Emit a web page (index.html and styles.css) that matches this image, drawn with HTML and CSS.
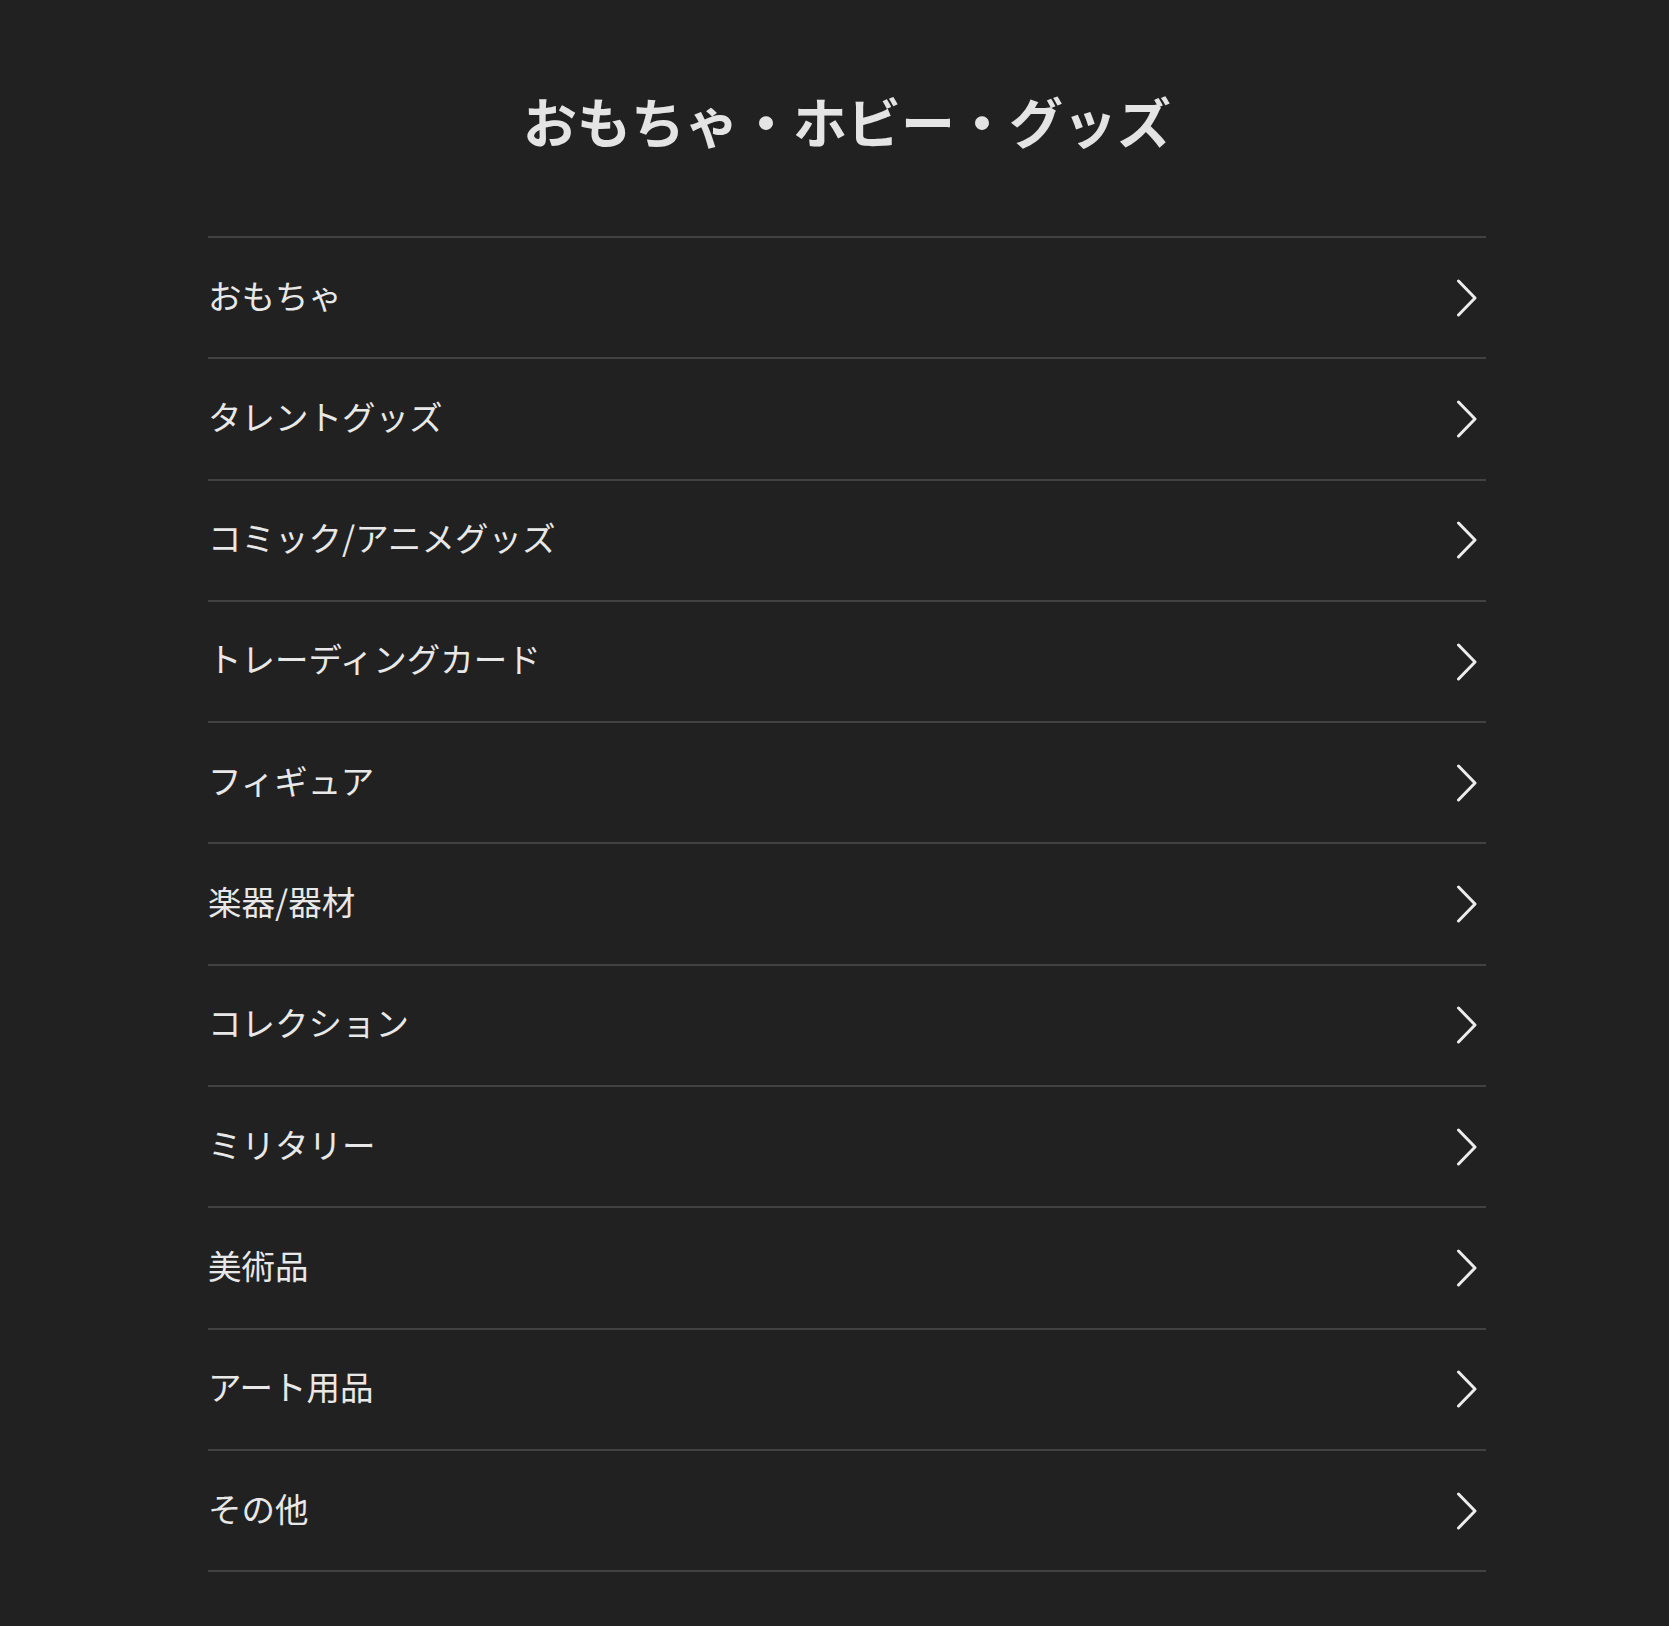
FILE: index.html
```html
<!DOCTYPE html>
<html lang="ja">
<head>
<meta charset="utf-8">
<title>おもちゃ・ホビー・グッズ</title>
<link rel="stylesheet" href="styles.css">
</head>
<body>
<main class="page">
  <h1 class="title">おもちゃ・ホビー・グッズ</h1>
  <ul class="list">
    <li class="item"><span class="label">おもちゃ</span><svg class="chev" viewBox="0 0 22 38" width="22" height="38"><path d="M2.5 2 L19 19 L2.5 36"/></svg></li>
    <li class="item"><span class="label">タレントグッズ</span><svg class="chev" viewBox="0 0 22 38" width="22" height="38"><path d="M2.5 2 L19 19 L2.5 36"/></svg></li>
    <li class="item"><span class="label">コミック/アニメグッズ</span><svg class="chev" viewBox="0 0 22 38" width="22" height="38"><path d="M2.5 2 L19 19 L2.5 36"/></svg></li>
    <li class="item"><span class="label">トレーディングカード</span><svg class="chev" viewBox="0 0 22 38" width="22" height="38"><path d="M2.5 2 L19 19 L2.5 36"/></svg></li>
    <li class="item"><span class="label">フィギュア</span><svg class="chev" viewBox="0 0 22 38" width="22" height="38"><path d="M2.5 2 L19 19 L2.5 36"/></svg></li>
    <li class="item"><span class="label">楽器/器材</span><svg class="chev" viewBox="0 0 22 38" width="22" height="38"><path d="M2.5 2 L19 19 L2.5 36"/></svg></li>
    <li class="item"><span class="label">コレクション</span><svg class="chev" viewBox="0 0 22 38" width="22" height="38"><path d="M2.5 2 L19 19 L2.5 36"/></svg></li>
    <li class="item"><span class="label">ミリタリー</span><svg class="chev" viewBox="0 0 22 38" width="22" height="38"><path d="M2.5 2 L19 19 L2.5 36"/></svg></li>
    <li class="item"><span class="label">美術品</span><svg class="chev" viewBox="0 0 22 38" width="22" height="38"><path d="M2.5 2 L19 19 L2.5 36"/></svg></li>
    <li class="item"><span class="label">アート用品</span><svg class="chev" viewBox="0 0 22 38" width="22" height="38"><path d="M2.5 2 L19 19 L2.5 36"/></svg></li>
    <li class="item"><span class="label">その他</span><svg class="chev" viewBox="0 0 22 38" width="22" height="38"><path d="M2.5 2 L19 19 L2.5 36"/></svg></li>
  </ul>
</main>
</body>
</html>
```

FILE: styles.css
```css
html, body {
  margin: 0;
  padding: 0;
  background: #212121;
}

body {
  font-family: "Noto Sans CJK JP", "Noto Sans", sans-serif;
  color: #e6e6e6;
  min-height: 1626px;
}

.page {
  width: 1278px;
  margin-left: 208px;
  padding-top: 88px;
}

.title {
  margin: 0;
  font-size: 54px;
  font-weight: 700;
  line-height: 65px;
  text-align: center;
  color: #e4e4e4;
  letter-spacing: 0;
}

.list {
  list-style: none;
  margin: 83px 0 0;
  padding: 0;
  border-top: 2px solid #424242;
}

.item {
  display: flex;
  align-items: center;
  justify-content: space-between;
  height: 119.3px;
  border-bottom: 2px solid #424242;
  padding-right: 8px;
}

.label {
  font-size: 33.5px;
  line-height: 1.2;
  margin-bottom: 6px;
  color: #e8e8e8;
}

.chev {
  display: block;
  fill: none;
  stroke: #ececec;
  stroke-width: 3;
  stroke-linecap: round;
  stroke-linejoin: round;
}
```
